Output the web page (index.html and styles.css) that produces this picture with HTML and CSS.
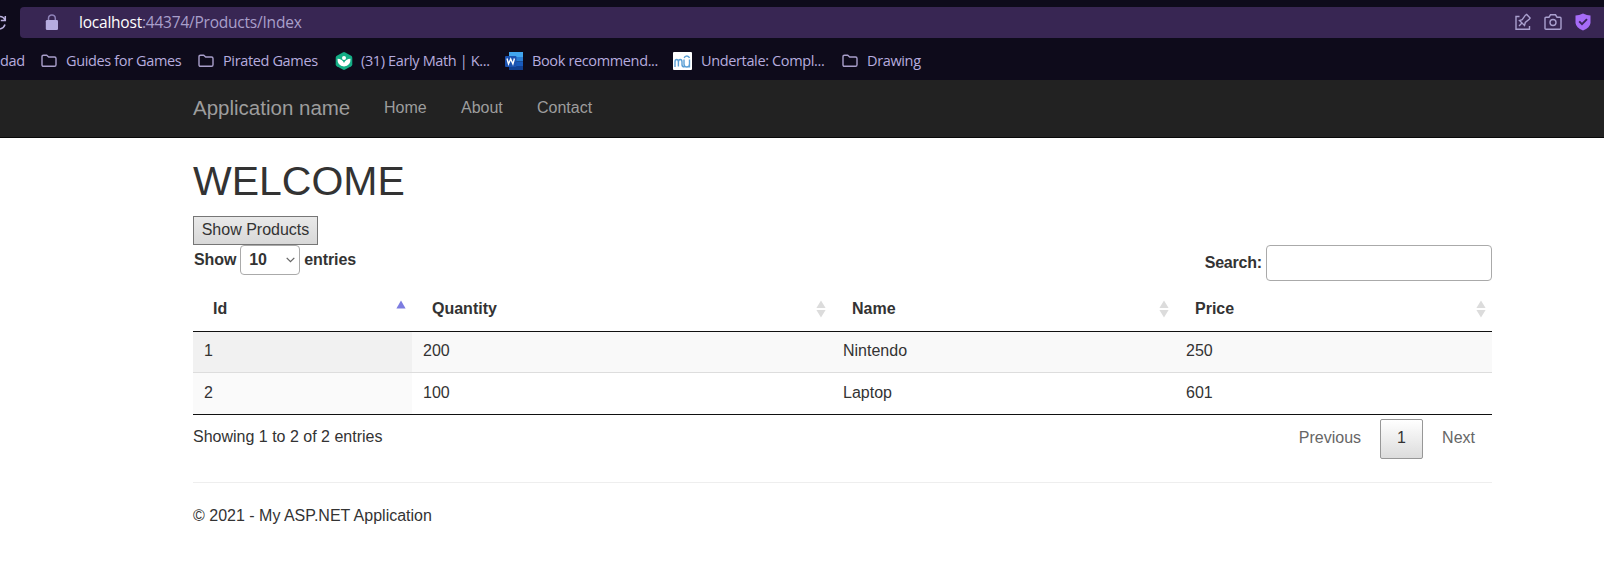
FILE: index.html
```html
<!DOCTYPE html>
<html lang="en">
<head>
<meta charset="utf-8">
<title>Index - My ASP.NET Application</title>
<link rel="stylesheet" href="styles.css">
</head>
<body>
<svg class="defs" width="0" height="0">
  <symbol id="folder" viewBox="0 0 16 14"><path d="M2.5 1.2h3.2L7.7 3h5.8q1.500 0 1.500 1.500v6.200q0 1.600-1.500 1.600h-11Q1 12.300 1 10.700V2.700q0-1.500 1.500-1.500z" fill="none" stroke="#a99fcb" stroke-width="1.400"/></symbol>
  <symbol id="sort" viewBox="0 0 10 18"><path d="M5 0.500 9.600 8H.4zM5 17.500.4 10h9.200z" fill="#dcdcdc"/></symbol>
  <symbol id="sort-asc" viewBox="0 0 10 18"><path d="M5 0.500 9.600 8.500H.4z" fill="#7c7ce0"/></symbol>
</svg>
<div class="browser">
  <div class="address-row">
    <svg class="reload" width="7" height="20" viewBox="0 0 7 20"><path d="M0 4.500Q3.500 4.500 5 8M5.300 4v4.500H.8M0 17Q4 16 5 12.500" fill="none" stroke="#b9b0dd" stroke-width="1.500"/></svg>
    <div class="address">
      <svg class="lock" width="14" height="17" viewBox="0 0 14 17"><path d="M3.500 7V4.300a3.400 3.400 0 0 1 6.800 0V7" fill="none" stroke="#8e82b8" stroke-width="1.500"/><rect x=".8" y="6" width="12.200" height="10" rx="1.300" fill="#b6acdf"/></svg>
      <span class="url"><b>localhost</b>:44374/Products/Index</span>
      <svg class="tool" width="17" height="18" viewBox="0 0 17 18"><g fill="none" stroke="#aaa0cf" stroke-width="1.400"><path d="M4.500 3.500H1v12.700h13.500V13M4 13l3.500-3.500M4.500 7.500l5 5 .8-3 3.900-3.300.9-1.200-3.400-3.600-1.300.8L7.200 6.600z"/></g></svg>
      <svg class="tool camera" width="18" height="18" viewBox="0 0 18 18"><g fill="none" stroke="#aaa0cf" stroke-width="1.400"><path d="M2 4.200h3L6.500 1.800h5L13 4.200h3q1 0 1 1v10q0 1-1 1H2q-1 0-1-1v-10q0-1 1-1z"/><circle cx="9" cy="9.500" r="3"/></g></svg>
      <svg class="tool shield" width="16" height="18" viewBox="0 0 16 18"><path d="M8 .5Q12 2.500 15.500 2.500V10Q15 14.500 8 17.500 1 14.500.5 10V2.500Q4 2.500 8 .5z" fill="#a66cf8"/><path d="m4.200 8.400 2.800 2.800 5-5" fill="none" stroke="#39245b" stroke-width="1.900"/></svg>
    </div>
  </div>
  <div class="bookmarks">
    <span class="bm cut"><span>dad</span></span>
    <span class="bm guides"><svg class="fo" width="16" height="14"><use href="#folder"/></svg><span>Guides for Games</span></span>
    <span class="bm pirated"><svg class="fo" width="16" height="14"><use href="#folder"/></svg><span>Pirated Games</span></span>
    <span class="bm khan"><svg width="18" height="18" viewBox="0 0 18 18"><path d="M7.800.4q1.200-.6 2.400 0l6 3.400q1.100.7 1.100 2v6.400q0 1.300-1.100 2l-6 3.400q-1.200.6-2.400 0l-6-3.400q-1.100-.7-1.100-2V5.800q0-1.300 1.100-2z" fill="#13ad85"/><circle cx="9" cy="6" r="2" fill="#fff"/><path d="M2.500 6.800Q7.500 7 9 11q1.500-4 6.500-4.200.3 7-6.500 7.700-6.800-.7-6.500-7.700z" fill="#fff"/></svg><span>(31) Early Math | K...</span></span>
    <span class="bm word"><svg width="18" height="18" viewBox="0 0 18 18"><path d="M4 0h14v5H4z" fill="#41a5ee"/><path d="M4 5h14v4.500H4z" fill="#2b7cd3"/><path d="M4 9.500h14V14H4z" fill="#185abd"/><path d="M4 14h14v4H4z" fill="#103f91"/><rect y="4" width="11.500" height="11" rx="1" fill="#1b52b0"/><path d="m2 6.500 1.500 5.500 2.200-5 2.200 5 1.500-5.500" fill="none" stroke="#fff" stroke-width="1.400"/></svg><span>Book recommend...</span></span>
    <span class="bm muse"><svg width="19" height="18" viewBox="0 0 19 18"><rect width="19" height="18" rx="1" fill="#fff"/><path d="M2 15V10q0-2.500 1.700-2.500T5.400 10v4.500M5.400 10q0-2.500 1.800-2.500T9 10v2.500q0 2.500 2.500 2.500M11 7.500v4.500q0 3 2.800 3 2.700 0 2.700-3V7.500M16.500 12v3.500M11.200 6q.5-2 2.700-2 2 0 2.600 2" fill="none" stroke="#5b9fd5" stroke-width="1.400"/></svg><span>Undertale: Compl...</span></span>
    <span class="bm"><svg class="fo" width="16" height="14"><use href="#folder"/></svg><span>Drawing</span></span>
  </div>
</div>
<nav class="navbar"><a class="brand">Application name</a><a class="link home">Home</a><a class="link about">About</a><a class="link">Contact</a></nav>
<main class="container">
  <h1>WELCOME</h1>
  <button class="show">Show Products</button>
  <div class="controls">
    <label class="length">Show <span class="select">10<svg width="9" height="6" viewBox="0 0 9 6"><path d="m.7.9 3.800 3.800L8.300.9" fill="none" stroke="#666" stroke-width="1.300"/></svg></span> entries</label>
    <label class="search">Search:<input type="text"></label>
  </div>
  <table>
    <colgroup><col class="c1"><col class="c2"><col class="c3"><col class="c4"></colgroup>
    <thead><tr>
      <th><div>Id<svg width="10" height="18"><use href="#sort-asc"/></svg></div></th>
      <th><div>Quantity<svg width="10" height="18"><use href="#sort"/></svg></div></th>
      <th><div>Name<svg width="10" height="18"><use href="#sort"/></svg></div></th>
      <th><div>Price<svg width="10" height="18"><use href="#sort"/></svg></div></th>
    </tr></thead>
    <tbody>
      <tr class="odd"><td>1</td><td>200</td><td>Nintendo</td><td>250</td></tr>
      <tr class="even"><td>2</td><td>100</td><td>Laptop</td><td>601</td></tr>
    </tbody>
  </table>
  <div class="below">
    <div class="info">Showing 1 to 2 of 2 entries</div>
    <div class="pager"><a>Previous</a><a class="current">1</a><a>Next</a></div>
  </div>
  <hr>
  <footer>© 2021 - My ASP.NET Application</footer>
</main>
</body>
</html>
```
FILE: styles.css
```css
* { box-sizing: border-box; }
body { margin: 0; background: #fff; color: #333; font: 16px/22px "Liberation Sans", Arial, sans-serif; }
.defs { display: block; position: absolute; }
.browser { height: 80px; padding-top: 7px; background: #0e0b1b; font-family: "Open Sans", "Noto Sans", sans-serif; overflow: hidden; }
.address-row { display: flex; height: 31px; }
.reload { flex: none; margin: 5px 13px 0 0; }
.address { flex: 1; display: flex; align-items: center; background: #382653; border-radius: 4px 0 0 4px; padding: 0 13px 0 25px; }
.lock { margin-top: -1px; }
.url { margin-left: 20px; padding-bottom: 2px; flex: 1; color: #a99fcb; font-size: 15.500px; white-space: nowrap; letter-spacing: -0.220px; }
.url b { color: #fff; font-weight: 400; }
.tool { margin-top: -1px; }
.camera { margin-left: 12px; }
.shield { margin-left: 13px; }
.bookmarks { display: flex; height: 42px; align-items: center; padding-top: 3px; color: #b6acdf; font-size: 14.500px; letter-spacing: -0.360px; white-space: nowrap; }
.bm { display: flex; align-items: center; flex: none; }
.bm .fo { margin-right: 9px; }
.cut { width: 41px; }
.guides { width: 157px; }
.pirated { width: 137px; }
.khan { width: 170px; }
.word { width: 168px; }
.muse { width: 169px; }
.khan svg { margin-right: 8px; }
.word svg { margin-right: 9px; }
.muse svg { margin-right: 9px; }
.navbar { height: 58px; padding: 0 0 2px 193px; background: #222; border-bottom: 1px solid #080808; display: flex; align-items: center; color: #9d9d9d; }
.brand { font-size: 20.500px; width: 191px; }
.home { width: 77px; }
.about { width: 76px; }
.container { width: 1299px; margin-left: 193px; }
h1 { margin: 0; padding-top: 21px; height: 78px; font-size: 41px; line-height: 45px; font-weight: 400; }
.show { display: block; width: 125px; height: 29px; padding: 0 0 2px; border: 1px solid #767676; background: linear-gradient(#e9e9e9, #d8d8d8); color: #333; font: inherit; }
.controls { display: flex; justify-content: space-between; height: 45px; font-weight: 700; }
.length { display: flex; height: 30px; align-items: center; gap: 4px; padding-left: 1px; letter-spacing: -0.100px; }
.select { width: 60px; height: 30px; border: 1px solid #aaa; border-radius: 4px; display: flex; align-items: center; justify-content: space-between; padding: 0 4px 0 8px; }
.search { display: flex; height: 36px; align-items: center; gap: 4px; letter-spacing: -0.200px; }
.search input { width: 226px; height: 36px; border: 1px solid #aaa; border-radius: 4px; }
table { width: 1299px; table-layout: fixed; border-collapse: separate; border-spacing: 0; }
.c1 { width: 219px; }
.c2 { width: 420px; }
.c3 { width: 343px; }
.c4 { width: 317px; }
th { height: 42px; padding: 0 6px 4px 20px; border-bottom: 1px solid #111; text-align: left; }
th div { display: flex; justify-content: space-between; align-items: center; }
td { padding: 0 11px 2px; }
.odd td { height: 40px; background: #f9f9f9; }
.even td { height: 43px; border-top: 1px solid #ddd; border-bottom: 1px solid #111; }
.odd td:first-child { background: #f1f1f1; }
.even td:first-child { background: #fafafa; }
.below { display: flex; justify-content: space-between; height: 67px; padding-top: 4px; }
.info { padding-top: 7px; }
.pager { display: flex; height: 40px; line-height: 36px; color: #666; }
.pager a { padding: 0 16px; border: 1px solid transparent; border-radius: 2px; }
.pager .current { width: 43px; margin: 0 2px; border-color: #979797; background: linear-gradient(#fff, #dcdcdc); color: #333; }
hr { margin: 0 0 22px; border: 0; border-top: 1px solid #eee; }
```
